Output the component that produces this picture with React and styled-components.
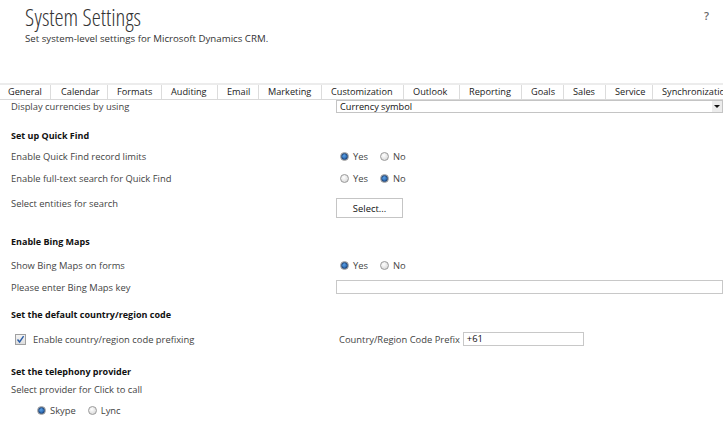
import React from "react";
import styled, { createGlobalStyle } from "styled-components";

const Global = createGlobalStyle`
  html, body { margin: 0; padding: 0; background: #fff; }
  body { font-family: "Open Sans", "Noto Sans", sans-serif; overflow: hidden; }
  * { box-sizing: border-box; }
`;

const Page = styled.div`
  width: 723px;
  height: 422px;
  overflow: hidden;
  display: flex;
  flex-direction: column;
`;

const Header = styled.header`
  display: flex;
  justify-content: space-between;
  padding: 2px 14px 0 25px;
  height: 83px;
`;

const TitleBlock = styled.div`
  display: flex;
  flex-direction: column;
`;

const Title = styled.h1`
  margin: 0;
  font-family: "Open Sans", sans-serif;
  font-weight: 300;
  font-stretch: 86%;
  font-size: 23px;
  line-height: 30px;
  color: #333;
  letter-spacing: 0px;
`;

const Subtitle = styled.div`
  font-size: 9.7px;
  line-height: 12px;
  color: #333;
  margin-top: 1px;
`;

const Help = styled.div`
  font-size: 11px;
  color: #666;
  margin-top: 6px;
  font-weight: 600;
`;

const TabBar = styled.nav`
  display: flex;
  height: 17px;
  border-top: 2px solid #ececec;
  border-bottom: 1px solid #d9d9d9;
  white-space: nowrap;
  overflow: hidden;
`;

const Tab = styled.div`
  flex: none;
  width: ${(p) => p.w}px;
  padding-left: ${(p) => p.pl}px;
  font-size: 9.2px;
  line-height: 14px;
  color: #1a1a1a;
  border-right: 1px solid #dcdcdc;
  background: #fff;
`;

const Content = styled.div`
  display: flex;
  flex-direction: column;
  padding-left: 11px;
`;

const Row = styled.div`
  display: grid;
  grid-template-columns: 325px 1fr;
  height: ${(p) => p.h}px;
  margin-top: ${(p) => p.mt || 0}px;
  align-items: ${(p) => (p.top ? "start" : "center")};
`;

const Label = styled.div`
  font-size: 9.4px;
  line-height: 13px;
  color: #444;
  margin-top: ${(p) => p.mt || 0}px;
  white-space: nowrap;
`;

const SectionTitle = styled.div`
  font-size: 9px;
  font-weight: 700;
  line-height: 18px;
  height: 18px;
  color: #111;
  margin-top: ${(p) => p.mt}px;
`;

const Select = styled.div`
  height: 13px;
  border: 1px solid #c4c4c4;
  display: flex;
  align-items: center;
  justify-content: space-between;
  font-size: 9.2px;
  color: #111;
  padding-left: 3px;
  margin-top: -1px;
`;

const Arrow = styled.div`
  width: 10px;
  height: 11px;
  background: #ececec;
  display: flex;
  align-items: center;
  justify-content: center;
  &::after {
    content: "";
    border-left: 3px solid transparent;
    border-right: 3px solid transparent;
    border-top: 3px solid #111;
  }
`;

const RadioGroup = styled.div`
  display: flex;
  align-items: center;
  padding-left: ${(p) => p.pl || 4}px;
`;

const RadioItem = styled.label`
  display: flex;
  align-items: center;
  font-size: 9.4px;
  color: #444;
  margin-right: 12px;
`;

const RadioCircle = styled.span`
  width: 9px;
  height: 9px;
  border-radius: 50%;
  border: 1px solid #9a9a9a;
  background: radial-gradient(circle at 40% 35%, #ffffff, #d0d0d0);
  margin-right: 4px;
  display: flex;
  align-items: center;
  justify-content: center;
  &::after {
    content: "";
    display: ${(p) => (p.checked ? "block" : "none")};
    width: 5px;
    height: 5px;
    border-radius: 50%;
    background: radial-gradient(circle at 40% 35%, #5aa0e6, #174f96);
    border: 0.5px solid #1b3f70;
  }
`;

const Button = styled.button`
  width: 67px;
  height: 20px;
  margin-top: 9px;
  background: #fff;
  border: 1px solid #c5c5c5;
  font-family: inherit;
  font-size: 9.4px;
  color: #111;
  padding: 0;
`;

const TextInput = styled.div`
  height: 14px;
  width: ${(p) => (p.w ? `${p.w}px` : "auto")};
  border: 1px solid #c8c8c8;
  font-size: 9.4px;
  color: #111;
  line-height: 12px;
  padding-left: 3px;
  background: #fff;
`;

const CheckLabel = styled.div`
  display: flex;
  align-items: center;
  padding-left: 4px;
  font-size: 9.4px;
  color: #444;
`;

const CheckBox = styled.span`
  width: 11px;
  height: 11px;
  border: 1px solid #a0a0a0;
  background: linear-gradient(#f4f4f4, #dedede);
  margin-right: 7px;
  display: flex;
  align-items: center;
  justify-content: center;
`;

const Inline = styled.div`
  display: flex;
  align-items: center;
  padding-left: 3px;
  font-size: 9.4px;
  color: #444;
  gap: 3px;
`;

const tabs = [
  ["General", 51, 8],
  ["Calendar", 57, 10],
  ["Formats", 54, 9],
  ["Auditing", 56, 9],
  ["Email", 41, 9],
  ["Marketing", 63, 9],
  ["Customization", 82, 9],
  ["Outlook", 56, 9],
  ["Reporting", 62, 9],
  ["Goals", 42, 9],
  ["Sales", 42, 9],
  ["Service", 47, 9],
  ["Synchronization", 90, 9],
];

const Radios = ({ options, checked, pl }) => (
  <RadioGroup pl={pl}>
    {options.map((o) => (
      <RadioItem key={o}>
        <RadioCircle checked={o === checked} />
        {o}
      </RadioItem>
    ))}
  </RadioGroup>
);

export default function App() {
  return (
    <Page>
      <Global />
      <Header>
        <TitleBlock>
          <Title>System Settings</Title>
          <Subtitle>Set system-level settings for Microsoft Dynamics CRM.</Subtitle>
        </TitleBlock>
        <Help>?</Help>
      </Header>
      <TabBar>
        {tabs.map(([t, w, pl]) => (
          <Tab key={t} w={w} pl={pl}>
            {t}
          </Tab>
        ))}
      </TabBar>
      <Content>
        <Row h={13}>
          <Label>Display currencies by using</Label>
          <Select>
            Currency symbol
            <Arrow />
          </Select>
        </Row>
        <SectionTitle mt={14}>Set up Quick Find</SectionTitle>
        <Row h={22}>
          <Label>Enable Quick Find record limits</Label>
          <Radios options={["Yes", "No"]} checked="Yes" />
        </Row>
        <Row h={22}>
          <Label>Enable full-text search for Quick Find</Label>
          <Radios options={["Yes", "No"]} checked="No" />
        </Row>
        <Row h={31} top>
          <Label mt={8}>Select entities for search</Label>
          <Button>Select...</Button>
        </Row>
        <SectionTitle mt={13}>Enable Bing Maps</SectionTitle>
        <Row h={22} mt={3}>
          <Label>Show Bing Maps on forms</Label>
          <Radios options={["Yes", "No"]} checked="Yes" />
        </Row>
        <Row h={22}>
          <Label>Please enter Bing Maps key</Label>
          <TextInput />
        </Row>
        <SectionTitle mt={8}>Set the default country/region code</SectionTitle>
        <Row h={22} mt={4}>
          <CheckLabel>
            <CheckBox>
              <svg width="9" height="9" viewBox="0 0 9 9">
                <path d="M1.5 4.5 L3.6 7 L7.6 1.2" fill="none" stroke="#2c5ea8" strokeWidth="1.4" />
              </svg>
            </CheckBox>
            Enable country/region code prefixing
          </CheckLabel>
          <Inline>
            Country/Region Code Prefix
            <TextInput w={121}>+61</TextInput>
          </Inline>
        </Row>
        <SectionTitle mt={13}>Set the telephony provider</SectionTitle>
        <Row h={16}>
          <Label>Select provider for Click to call</Label>
        </Row>
        <Row h={22} mt={2}>
          <Radios options={["Skype", "Lync"]} checked="Skype" pl={26} />
        </Row>
      </Content>
    </Page>
  );
}
